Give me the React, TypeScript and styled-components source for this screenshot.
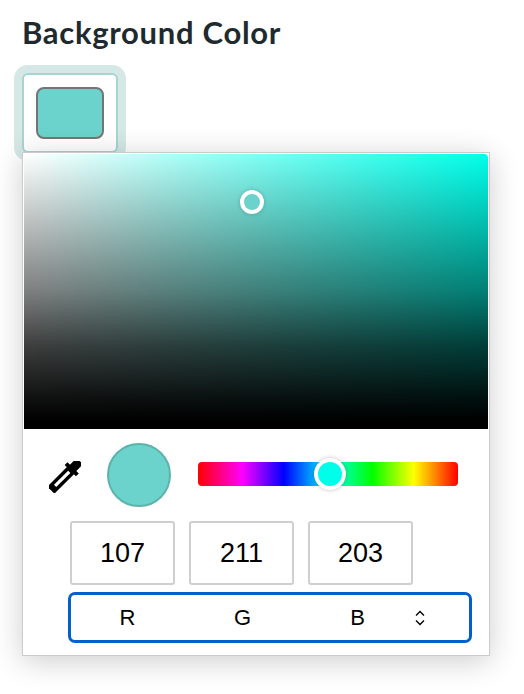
import React from 'react'
import styled, { createGlobalStyle } from 'styled-components'

let GlobalStyle = createGlobalStyle`
	html, body {
		margin: 0;
		background: #fff;
	}
`

let Wrapper = styled.div`
	position: relative;
	width: 524px;
	height: 694px;
	overflow: hidden;
	padding: 14px 0 0 14px;
	box-sizing: border-box;
`

let Title = styled.h2`
	margin: 0 0 22px 8px;
	font-family: Lato, sans-serif;
	font-weight: 700;
	font-size: 31px;
	line-height: 37px;
	letter-spacing: 0.7px;
	color: #1f2a2e;
`

let SwatchButton = styled.button`
	display: flex;
	align-items: center;
	justify-content: center;
	width: 96px;
	height: 80px;
	margin: 8px;
	padding: 0;
	background: #fff;
	border: 2px solid #a5d6d2;
	border-radius: 6px;
	box-shadow: 0 0 0 8px #d5e8e6;
	box-sizing: border-box;
`

let SwatchColor = styled.div`
	width: 68px;
	height: 52px;
	margin-left: -1px;
	background: #6bd3cb;
	border: 2px solid #757575;
	border-radius: 8px;
	box-sizing: border-box;
`

let Popover = styled.div`
	position: absolute;
	left: 22px;
	top: 152px;
	width: 468px;
	height: 504px;
	box-sizing: border-box;
	padding: 1px;
	background: #fff;
	border: 1px solid #cbcbcb;
	box-shadow: 0 5px 28px rgba(0, 0, 0, 0.2);
`

let SaturationArea = styled.div`
	position: relative;
	height: 275px;
	background:
		linear-gradient(
			to top,
			#000 0%,
			#000 3%,
			rgba(0, 0, 0, 0.93) 12%,
			rgba(0, 0, 0, 0.76) 30%,
			rgba(0, 0, 0, 0.5) 50%,
			rgba(0, 0, 0, 0) 100%
		),
		linear-gradient(to right, #fff, rgba(255, 255, 255, 0)),
		#00ffea;
	border-radius: 4px 4px 0 0;
`

let SaturationThumb = styled.div`
	position: absolute;
	left: 216px;
	top: 36px;
	width: 24px;
	height: 24px;
	box-sizing: border-box;
	border: 4px solid #fff;
	border-radius: 50%;
	background: #6bd3cb;
	box-shadow: 0 0 4px rgba(0, 0, 0, 0.2);
`

let ControlsRow = styled.div`
	display: flex;
	align-items: center;
	height: 64px;
	margin-top: 14px;
	padding-left: 25px;
`

let DropperIcon = styled.svg`
	width: 32px;
	height: 32px;
	margin-right: 26px;
	transform: translateY(2px);
`

let ColorPreview = styled.div`
	width: 64px;
	height: 64px;
	box-sizing: border-box;
	background: #6bd3cb;
	border: 2px solid #5cb3ac;
	border-radius: 50%;
	margin-right: 27px;
`

let HueTrack = styled.div`
	position: relative;
	width: 260px;
	height: 24px;
	margin-top: -2px;
	border-radius: 4px;
	background: linear-gradient(to right, #f00 0%, #f0f 17%, #00f 33%, #0ff 50%, #0f0 67%, #ff0 83%, #f00 100%);
`

let HueThumb = styled.div`
	position: absolute;
	left: 116px;
	top: -4px;
	width: 32px;
	height: 32px;
	box-sizing: border-box;
	border: 4px solid #fff;
	border-radius: 50%;
	background: #00ffea;
	box-shadow: 0 0 4px rgba(0, 0, 0, 0.25);
`

let InputRow = styled.div`
	display: flex;
	gap: 14px;
	margin-top: 14px;
	padding-left: 46px;
`

let ValueBox = styled.div`
	display: flex;
	align-items: center;
	justify-content: center;
	width: 105px;
	height: 64px;
	box-sizing: border-box;
	background: #fff;
	border: 2px solid #cfcfcf;
	border-radius: 3px;
	font-family: 'Liberation Sans', Arial, sans-serif;
	font-size: 27px;
	color: #000;
`

let ModeSelect = styled.div`
	display: flex;
	align-items: center;
	width: 404px;
	height: 51px;
	margin: 7px 0 0 44px;
	box-sizing: border-box;
	border: 3px solid #0060cc;
	border-radius: 7px;
	font-family: 'Liberation Sans', Arial, sans-serif;
	font-size: 22px;
	color: #000;
`

let ModeLabel = styled.span`
	width: 115px;
	text-align: center;
	&:first-child {
		margin-left: -1px;
	}
`

let Chevrons = styled.svg`
	width: 12px;
	height: 18px;
	margin-left: -1px;
	fill: none;
	stroke: #000;
	stroke-width: 1.4;
`

export default function App() {
	return (
		<Wrapper>
			<GlobalStyle />
			<Title>Background Color</Title>
			<SwatchButton>
				<SwatchColor />
			</SwatchButton>
			<Popover>
				<SaturationArea>
					<SaturationThumb />
				</SaturationArea>
				<ControlsRow>
					<DropperIcon viewBox="0 0 32 32">
						<g transform="translate(16 15) rotate(45)">
							<rect x="-4.5" y="-21" width="9" height="11" rx="1.5" fill="#000" />
							<rect x="-8" y="-11.5" width="16" height="4" fill="#000" />
							<rect x="-5" y="-8" width="10" height="28" fill="#000" />
							<rect x="-1.6" y="-6" width="3.2" height="20" fill="#fff" />
						</g>
					</DropperIcon>
					<ColorPreview />
					<HueTrack>
						<HueThumb />
					</HueTrack>
				</ControlsRow>
				<InputRow>
					<ValueBox>107</ValueBox>
					<ValueBox>211</ValueBox>
					<ValueBox>203</ValueBox>
				</InputRow>
				<ModeSelect>
					<ModeLabel>R</ModeLabel>
					<ModeLabel>G</ModeLabel>
					<ModeLabel>B</ModeLabel>
					<Chevrons viewBox="0 0 12 18">
						<path d="M2 6.5 L6 2.5 L10 6.5" />
						<path d="M2 11.5 L6 15.5 L10 11.5" />
					</Chevrons>
				</ModeSelect>
			</Popover>
		</Wrapper>
	)
}
